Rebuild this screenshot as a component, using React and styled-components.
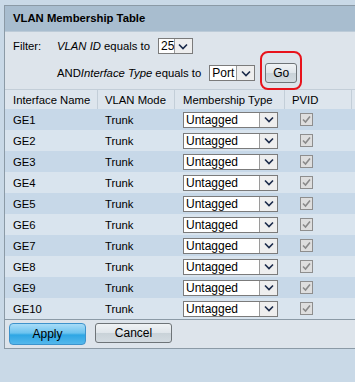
import styled, { createGlobalStyle } from "styled-components"

const GlobalStyle = createGlobalStyle`
html, body {
    margin: 0;
    padding: 0;
    background: #c9d9e7;
    overflow: hidden;
}
body {
    font-family: "Liberation Sans", Arial, sans-serif;
    font-size: 11.3px;
    color: #000;
}
`

const rows = ['GE1', 'GE2', 'GE3', 'GE4', 'GE5', 'GE6', 'GE7', 'GE8', 'GE9', 'GE10']

const Chevron = () => (
    <svg width="10" height="7" viewBox="0 0 10 7">
        <path d="M1 1.5 L5 5.5 L9 1.5" fill="none" stroke="#1b2a4a" strokeWidth="1.6" />
    </svg>
)

const Select = ({value, width}) => (
    <SelectBox $width={width}>
        <SelectValue>{value}</SelectValue>
        <SelectArrow><Chevron /></SelectArrow>
    </SelectBox>
)

const Check = () => (
    <CheckBox>
        <svg width="11" height="11" viewBox="0 0 11 11">
            <path d="M2 5.5 L4.5 8 L9 2.5" fill="none" stroke="#8a8a8a" strokeWidth="1.6" />
        </svg>
    </CheckBox>
)

const App = () => {
    return (
        <Page>
            <GlobalStyle />
            <Panel>
                <Title>VLAN Membership Table</Title>
                <Filter>
                    <FilterRow>
                        <FilterLabel>Filter:</FilterLabel>
                        <span><i>VLAN ID</i> equals to</span>
                        <Select value="25" width={35} />
                    </FilterRow>
                    <FilterRow $indent>
                        <span>AND<i>Interface Type</i> equals to</span>
                        <Select value="Port" width={46} />
                        <GoWrap>
                            <GreyButton $width={32}>Go</GreyButton>
                        </GoWrap>
                    </FilterRow>
                </Filter>
                <Table>
                    <HeadRow>
                        <HeadCell>Interface Name</HeadCell>
                        <HeadCell $pad={7}>VLAN Mode</HeadCell>
                        <HeadCell>Membership Type</HeadCell>
                        <HeadCell $pad={7}>PVID</HeadCell>
                        <HeadCell />
                    </HeadRow>
                    {rows.map((name, i) => (
                        <Row key={name} $odd={i % 2 === 0}>
                            <Cell>{name}</Cell>
                            <Cell $pad={7}>Trunk</Cell>
                            <Cell><Select value="Untagged" width={95} /></Cell>
                            <Cell $pad={15}><Check /></Cell>
                            <Cell />
                        </Row>
                    ))}
                </Table>
                <Actions>
                    <ApplyButton>Apply</ApplyButton>
                    <GreyButton $width={77}>Cancel</GreyButton>
                </Actions>
            </Panel>
        </Page>
    )
}

export default App


const Page = styled.div`
padding: 5px 0 0 4px;
width: 355px;
height: 382px;
box-sizing: border-box;
`

const Panel = styled.div`
width: 100%;
box-sizing: border-box;
background: #dde4eb;
border: 1px solid #8b9aa6;
border-right: none;
`

const Title = styled.div`
height: 25px;
line-height: 25px;
padding-left: 8px;
background: #a8bdcf;
border-bottom: 1px solid #bccbd8;
font-weight: bold;
font-size: 11.3px;
`

const Filter = styled.div`
display: flex;
flex-direction: column;
padding: 6px 0 0 8px;
height: 51px;
`

const FilterRow = styled.div`
display: flex;
align-items: center;
height: 16px;
padding-left: ${p => p.$indent ? 44 : 0}px;
margin-top: ${p => p.$indent ? 11 : 0}px;
gap: 8px;

i {
    font-style: italic;
}
`

const FilterLabel = styled.span`
width: 36px;
`

const SelectBox = styled.div`
display: flex;
width: ${p => p.$width}px;
height: 16px;
box-sizing: border-box;
border: 1px solid #7b7b7b;
background: #fff;
`

const SelectValue = styled.div`
flex: 1;
padding-left: 2px;
line-height: 14px;
font-size: 12px;
overflow: hidden;
white-space: nowrap;
`

const SelectArrow = styled.div`
width: 17px;
display: flex;
align-items: center;
justify-content: center;
background: #eeeeee;
border-left: 1px solid #9a9a9a;
`

const GoWrap = styled.div`
position: relative;
margin-left: 2px;
display: flex;

&::after {
    content: "";
    position: absolute;
    left: -5px;
    right: -5px;
    top: -12px;
    bottom: -7px;
    border: 2.5px solid #e8131c;
    border-radius: 8px;
    pointer-events: none;
}
`

const GreyButton = styled.div`
width: ${p => p.$width}px;
height: 20px;
box-sizing: border-box;
display: flex;
align-items: center;
justify-content: center;
border: 1px solid #6e7478;
border-radius: 3px;
background: linear-gradient(#f0f3f5, #dfe5ea 50%, #c9d2d8 51%, #d3dbe1);
font-size: 12px;
`

const Table = styled.div`
display: flex;
flex-direction: column;
border-top: 1px solid #c3ced8;
border-bottom: 1px solid #8b9aa6;
`

const HeadRow = styled.div`
display: grid;
grid-template-columns: 93px 77px 110px 67px 1fr;
height: 19px;
background: #dde5ed;
`

const HeadCell = styled.div`
display: flex;
align-items: center;
padding-left: ${p => p.$pad ?? 8}px;
border-right: 1px solid #c3ced8;
white-space: nowrap;
`

const Row = styled.div`
display: grid;
grid-template-columns: 93px 77px 110px 67px 1fr;
height: 21px;
background: ${p => p.$odd ? '#c7d8e8' : '#d9e4ee'};
`

const Cell = styled.div`
display: flex;
align-items: center;
padding-left: ${p => p.$pad ?? 8}px;
white-space: nowrap;
`

const CheckBox = styled.div`
width: 13px;
height: 13px;
box-sizing: border-box;
border: 1px solid #8e8e8e;
background: #dedede;
display: flex;
align-items: center;
justify-content: center;
`

const Actions = styled.div`
display: flex;
gap: 9px;
padding: 3px 0 3px 4px;
`

const ApplyButton = styled.div`
width: 77px;
height: 22px;
box-sizing: border-box;
display: flex;
align-items: center;
justify-content: center;
border: 1px solid #3d93cc;
border-radius: 4px;
background: linear-gradient(#a8dcf7, #6cc3ef 45%, #2ea6e4 55%, #54b8ec);
font-size: 12px;
`
